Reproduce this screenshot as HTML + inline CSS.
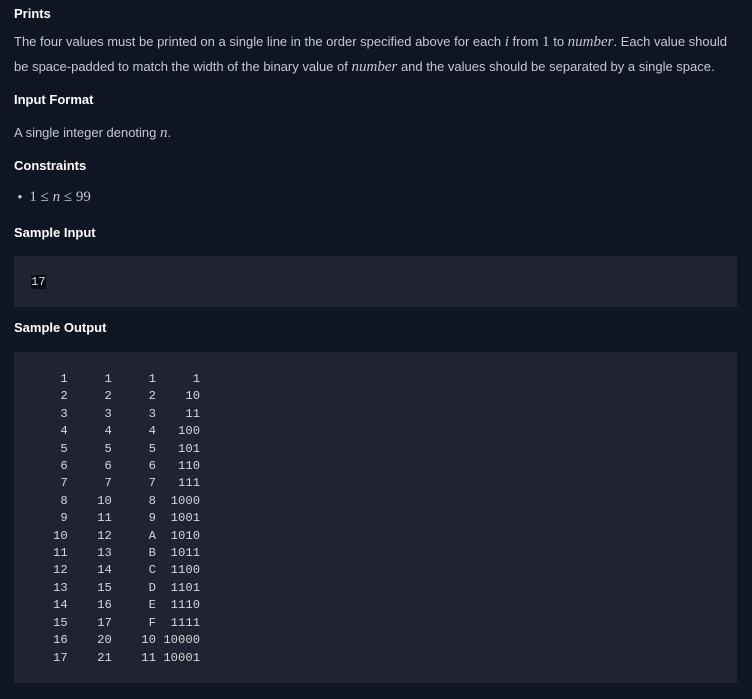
<!DOCTYPE html>
<html><head><style>
body{margin:0;background:#0f1521;width:752px;height:699px;overflow:hidden;font-family:"Liberation Sans",sans-serif;color:#c5c8ce;}
.h{position:absolute;left:14px;font-weight:bold;color:#fff;font-size:13px;}
.p{position:absolute;left:14px;font-size:13px;white-space:nowrap;}
.m{font-family:"Liberation Serif",serif;font-style:italic;font-size:15px;}
.r{font-family:"Liberation Serif",serif;font-size:15px;}
.blk{position:absolute;left:14px;width:723px;background:#1f2430;}
pre{margin:0;position:absolute;left:31px;font-family:"Liberation Mono",monospace;font-size:12.25px;line-height:17.4px;color:#d4d6da;}
</style></head><body>
<div class="h" style="top:6px">Prints</div>
<div class="p" style="top:34px">The four values must be printed on a single line in the order specified above for each <span class="m">i</span> from <span class="r">1</span> to <span class="m">number</span>. Each value should</div>
<div class="p" style="top:59px">be space-padded to match the width of the binary value of <span class="m">number</span> and the values should be separated by a single space.</div>
<div class="h" style="top:92px">Input Format</div>
<div class="p" style="top:125px">A single integer denoting <span class="m">n</span>.</div>
<div class="h" style="top:158px">Constraints</div>
<div class="p" style="top:189px">&nbsp;•&nbsp; <span class="r">1 ≤ <i>n</i> ≤ 99</span></div>
<div class="h" style="top:225px">Sample Input</div>
<div class="blk" style="top:256px;height:51px"><pre style="left:17px;top:18px"><span style="background:#0b0e14">17</span></pre></div>
<div class="h" style="top:320px">Sample Output</div>
<div class="blk" style="top:352px;height:331px"><pre style="left:17px;top:19px">    1     1     1     1
    2     2     2    10
    3     3     3    11
    4     4     4   100
    5     5     5   101
    6     6     6   110
    7     7     7   111
    8    10     8  1000
    9    11     9  1001
   10    12     A  1010
   11    13     B  1011
   12    14     C  1100
   13    15     D  1101
   14    16     E  1110
   15    17     F  1111
   16    20    10 10000
   17    21    11 10001</pre></div>
</body></html>
